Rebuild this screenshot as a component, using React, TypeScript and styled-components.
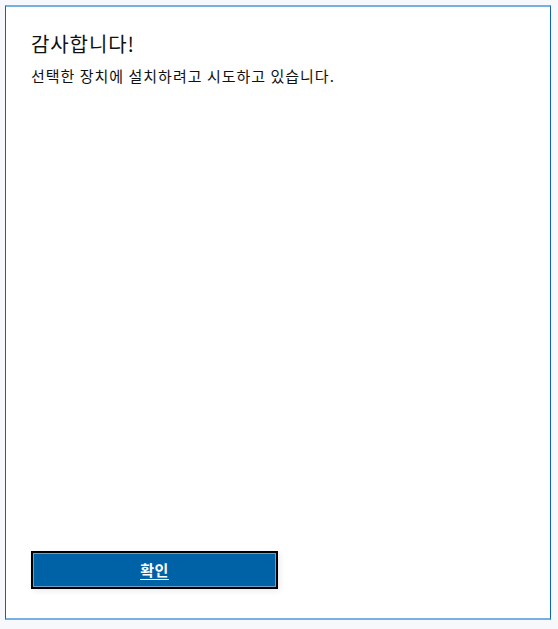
import React from 'react';
import styled, { createGlobalStyle } from 'styled-components';

const GlobalStyle = createGlobalStyle`
  html, body {
    margin: 0;
    padding: 0;
    background: #f6f8fb;
  }
  body {
    font-family: "Noto Sans CJK KR", "Noto Sans", sans-serif;
  }
`;

const Page = styled.div`
  width: 558px;
  height: 629px;
  padding: 5px 7px 9px 5px;
  box-sizing: border-box;
`;

const Dialog = styled.div`
  height: 100%;
  box-sizing: border-box;
  background: #ffffff;
  border-top: 2px solid #79aee0;
  border-bottom: 2px solid #79aee0;
  border-left: 1px solid #0a63b8;
  border-right: 1px solid #0a63b8;
  padding: 23px 25px 29px 25px;
  display: flex;
  flex-direction: column;
`;

const Title = styled.h1`
  margin: 0;
  font-size: 20px;
  font-weight: 400;
  line-height: 28px;
  letter-spacing: 0.9px;
  color: #111111;
`;

const Message = styled.p`
  margin: 8px 0 0 0;
  font-size: 15px;
  line-height: 20px;
  letter-spacing: 1px;
  color: #111111;
`;

const Spacer = styled.div`
  flex: 1;
`;

const PrimaryButton = styled.button`
  width: 247px;
  height: 38px;
  box-sizing: border-box;
  background: #0062a6;
  border: 2px solid #000000;
  box-shadow: inset 0 0 0 1px #6f9fc9, 2px 2px 6px rgba(0, 0, 0, 0.08);
  color: #ffffff;
  font-family: "Noto Sans CJK KR", "Noto Sans", sans-serif;
  font-size: 15px;
  font-weight: 700;
  line-height: 20px;
  letter-spacing: 0.5px;
  text-decoration: underline;
  text-underline-offset: 3px;
  cursor: pointer;
  padding: 0;
`;

export default function App() {
  return (
    <>
      <GlobalStyle />
      <Page>
        <Dialog>
          <Title>감사합니다!</Title>
          <Message>선택한 장치에 설치하려고 시도하고 있습니다.</Message>
          <Spacer />
          <PrimaryButton>확인</PrimaryButton>
        </Dialog>
      </Page>
    </>
  );
}
